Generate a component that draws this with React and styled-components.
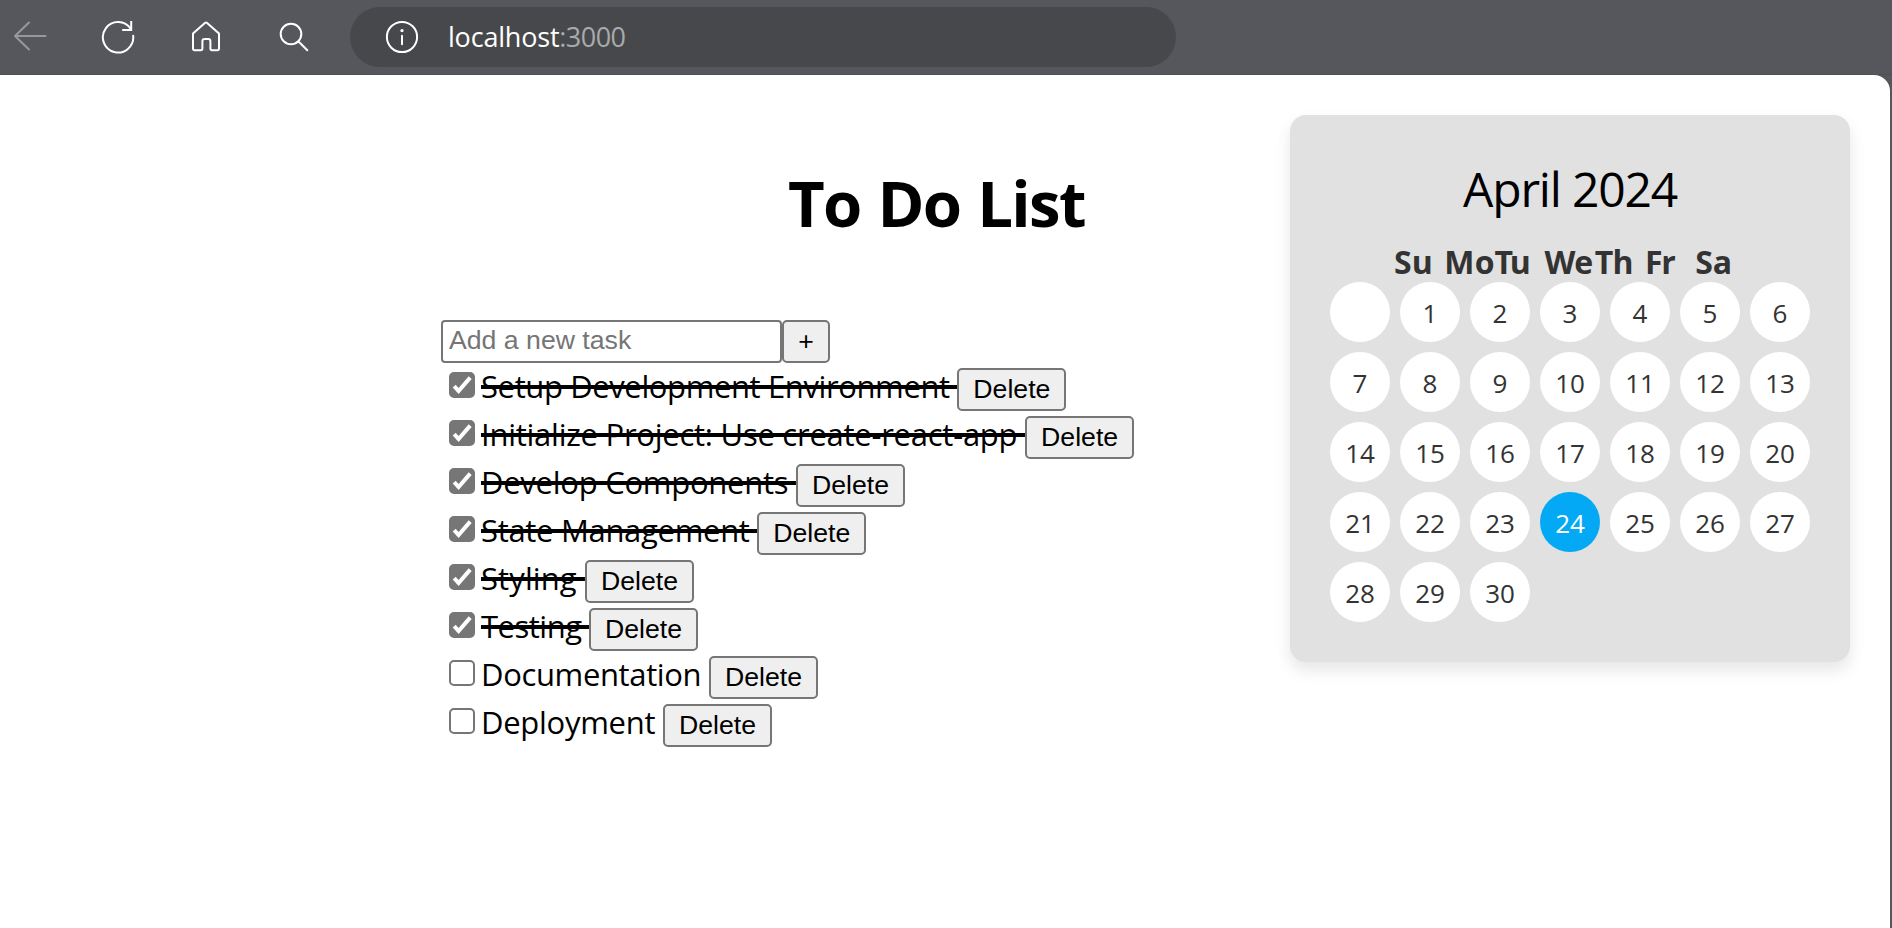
import React, { useState } from "react";
import styled, { createGlobalStyle } from "styled-components";

const GlobalStyle = createGlobalStyle`
  * { box-sizing: border-box; }
  body {
    margin: 0;
    background: #56575c;
    color: #000;
    font-family: "Open Sans", "Noto Sans", sans-serif;
    overflow: hidden;
  }
`;

const Window = styled.div`
  display: flex;
  flex-direction: column;
  width: 1892px;
  height: 928px;
  background: #56575c;
`;

const Toolbar = styled.header`
  display: flex;
  align-items: center;
  height: 75px;
  padding: 0 0 1px 12px;
  border-bottom: 1px solid #4f5055;
`;

const NavButtons = styled.nav`
  display: flex;
  gap: 52px;
  margin-right: 38px;
`;

const Icon = styled.svg`
  display: block;
  width: 36px;
  height: 36px;
  fill: none;
  stroke: ${(p) => (p.$muted ? "#97989b" : "#fff")};
  stroke-width: 2;
  stroke-linecap: round;
  stroke-linejoin: round;
`;

const AddressBar = styled.div`
  display: flex;
  align-items: center;
  width: 826px;
  height: 60px;
  padding-left: 34px;
  border-radius: 30px;
  background: #47484b;
`;

const Url = styled.div`
  display: flex;
  margin-left: 28px;
  padding-top: 1px;
  font-size: 27px;
  line-height: 36px;
`;

const Host = styled.span`
  color: #fff;
  letter-spacing: -0.2px;
`;

const Port = styled.span`
  color: #a9aaac;
  letter-spacing: -0.55px;
`;

const Page = styled.main`
  display: flex;
  justify-content: space-between;
  align-items: flex-start;
  flex: 1;
  width: 1890px;
  padding-right: 40px;
  border-top-right-radius: 16px;
  background: #fff;
`;

const TodoSection = styled.section`
  padding: 88px 0 0 441px;
`;

const Heading = styled.h1`
  margin: 0 0 77px 347px;
  font-size: 63.5px;
  font-weight: 700;
  line-height: 80px;
  letter-spacing: -1.7px;
  word-spacing: 2px;
`;

const AddForm = styled.div`
  display: flex;
  height: 43px;
`;

const TaskInput = styled.input`
  width: 341px;
  padding: 0 6px 2px;
  border: 2px solid #767676;
  border-radius: 4px;
  background: #fff;
  font: 26.67px "Liberation Sans", Arial, sans-serif;

  &::placeholder { color: #757575; opacity: 1; }
`;

const Button = styled.button`
  width: ${(p) => p.$width}px;
  height: 43px;
  padding: 0 0 2px;
  border: 2px solid #767676;
  border-radius: 5px;
  background: #efefef;
  color: #000;
  font: 26.67px/36px "Liberation Sans", Arial, sans-serif;
`;

const TaskList = styled.ul`
  margin: 3px 0 0;
  padding: 0 0 0 8px;
  list-style: none;
`;

const TaskRow = styled.li`
  display: flex;
  align-items: flex-start;
  height: 48px;

  ${Button} { margin-top: 2px; }
`;

const Checkbox = styled.span`
  display: flex;
  width: 26px;
  height: 26px;
  margin: 6px 6px 0 0;
  border: 2px solid #767676;
  border-radius: 5px;
  background: ${(p) => (p.$checked ? "#767676" : "#fff")};
`;

const CheckMark = styled.svg`
  width: 22px;
  height: 22px;
  fill: none;
  stroke: #fff;
  stroke-width: 4;
`;

const TaskText = styled.span`
  font-size: 31px;
  line-height: 40px;
  white-space: pre;
  letter-spacing: ${(p) => p.$tracking}px;
  text-decoration: ${(p) => (p.$done ? "line-through 3.5px" : "none")};
`;

const Calendar = styled.aside`
  width: 560px;
  margin-top: 40px;
  padding: 42px 40px 40px;
  border-radius: 16px;
  background: #e1e1e1;
  box-shadow: 0 8px 16px rgba(0, 0, 0, 0.1);
`;

const MonthTitle = styled.div`
  margin-bottom: 20px;
  font-size: 48px;
  line-height: 64px;
  letter-spacing: -1.2px;
  text-align: center;
`;

const Weekdays = styled.div`
  display: grid;
  grid-template-columns: repeat(7, 50.2px);
  padding-left: 64px;
  color: #333;
  font-size: 32px;
  font-weight: 700;
  line-height: 41px;
`;

const Weekday = styled.span`
  letter-spacing: ${(p) => p.$tracking}px;
`;

const Days = styled.div`
  display: grid;
  grid-template-columns: repeat(7, 60px);
  gap: 10px;
`;

const Day = styled.div`
  height: 60px;
  border-radius: 50%;
  background: ${(p) => (p.$today ? "#03a9f4" : "#fff")};
  color: ${(p) => (p.$today ? "#fff" : "#333")};
  font-size: 26px;
  line-height: 63px;
  text-align: center;
`;

const initialTasks = [
  { text: "Setup Development Environment", done: true, tracking: -0.39 },
  { text: "Initialize Project: Use create-react-app", done: true, tracking: -0.25 },
  { text: "Develop Components", done: true, tracking: -0.27 },
  { text: "State Management", done: true, tracking: -0.31 },
  { text: "Styling", done: true, tracking: 0.1 },
  { text: "Testing", done: true, tracking: -0.5 },
  { text: "Documentation", done: false, tracking: -0.36 },
  { text: "Deployment", done: false, tracking: -0.28 },
];

const weekdays = [
  ["Su", 0],
  ["Mo", 0.5],
  ["Tu", -3.2],
  ["We", -1.2],
  ["Th", -0.8],
  ["Fr", -1.2],
  ["Sa", 0],
];

const days = [null, ...Array.from({ length: 30 }, (_, i) => i + 1)];

export default function App() {
  const [tasks, setTasks] = useState(initialTasks);
  const [draft, setDraft] = useState("");

  const addTask = () => {
    if (!draft.trim()) return;
    setTasks([...tasks, { text: draft.trim(), done: false, tracking: -0.3 }]);
    setDraft("");
  };
  const toggle = (index) =>
    setTasks(tasks.map((t, i) => (i === index ? { ...t, done: !t.done } : t)));
  const remove = (index) => setTasks(tasks.filter((_, i) => i !== index));

  return (
    <Window>
      <GlobalStyle />
      <Toolbar>
        <NavButtons>
          <Icon $muted viewBox="0 0 36 36">
            <path d="M33.5 17H3M17 3.5L3 17L17 30.5" />
          </Icon>
          <Icon viewBox="0 0 36 36">
            <path d="M33.2 16.8A15.2 15.2 0 1 1 30.8 10" />
            <path d="M31.2 3V11H23.2" strokeLinecap="square" strokeLinejoin="miter" />
          </Icon>
          <Icon viewBox="0 0 36 36">
            <path d="M5 14.6L16.9 3.9Q18 3 19.1 3.9L31 14.6V29.6Q31 31.2 29.4 31.2H24Q22.4 31.2 22.4 29.6V22.2Q22.4 20 20.2 20H16.6Q14.4 20 14.4 22.2V29.6Q14.4 31.2 12.8 31.2H6.6Q5 31.2 5 29.6Z" />
          </Icon>
          <Icon viewBox="0 0 36 36">
            <circle cx="15" cy="15" r="10.3" />
            <path d="M22.5 22.5L31.3 31.3" />
          </Icon>
        </NavButtons>
        <AddressBar>
          <Icon viewBox="0 0 36 36">
            <circle cx="18" cy="18" r="15.1" />
            <path d="M18 16.8V25.2" />
            <circle cx="18" cy="11.6" r="0.7" fill="#fff" />
          </Icon>
          <Url>
            <Host>localhost</Host>
            <Port>:3000</Port>
          </Url>
        </AddressBar>
      </Toolbar>

      <Page>
        <TodoSection>
          <Heading>To Do List</Heading>
          <AddForm>
            <TaskInput
              placeholder="Add a new task"
              value={draft}
              onChange={(e) => setDraft(e.target.value)}
            />
            <Button $width={48} onClick={addTask}>+</Button>
          </AddForm>
          <TaskList>
            {tasks.map((task, i) => (
              <TaskRow key={task.text}>
                <Checkbox
                  role="checkbox"
                  aria-checked={task.done}
                  $checked={task.done}
                  onClick={() => toggle(i)}
                >
                  {task.done && (
                    <CheckMark viewBox="0 0 22 22">
                      <path d="M3.2 12.2L7.6 17L19.2 3.6" />
                    </CheckMark>
                  )}
                </Checkbox>
                <TaskText $done={task.done} $tracking={task.tracking}>
                  {task.text + " "}
                </TaskText>
                <Button $width={109} onClick={() => remove(i)}>Delete</Button>
              </TaskRow>
            ))}
          </TaskList>
        </TodoSection>

        <Calendar>
          <MonthTitle>April 2024</MonthTitle>
          <Weekdays>
            {weekdays.map(([name, tracking]) => (
              <Weekday key={name} $tracking={tracking}>{name}</Weekday>
            ))}
          </Weekdays>
          <Days>
            {days.map((day, i) => (
              <Day key={i} $today={day === 24}>{day}</Day>
            ))}
          </Days>
        </Calendar>
      </Page>
    </Window>
  );
}
